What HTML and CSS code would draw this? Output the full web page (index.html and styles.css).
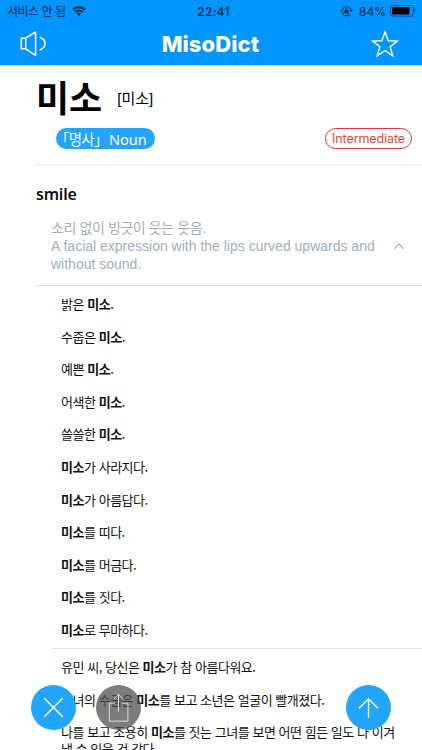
FILE: index.html
```html
<!DOCTYPE html>
<html lang="ko">
<head>
  <meta charset="UTF-8">
  <meta name="viewport" content="width=device-width, initial-scale=1">
  <title>MisoDict</title>
  <link rel="stylesheet" href="styles.css">
</head>
<body>
  <header class="header">
    <div class="status">
      <div class="status-left">
        <span class="carrier">서비스 안 됨</span>
        <svg class="wifi" width="14" height="10" viewBox="0 0 14 10" fill="none" stroke="#06243f" stroke-width="2">
          <path d="M.8 3.8a8.8 8.8 0 0 1 12.4 0M3.2 6.1a5.4 5.4 0 0 1 7.6 0"/>
          <path d="M7 10 4.9 7.8a3 3 0 0 1 4.2 0z" fill="#06243f" stroke="none"/>
        </svg>
      </div>
      <span class="clock">22:41</span>
      <div class="status-right">
        <svg width="12" height="12" viewBox="0 0 12 12" fill="none" stroke="#06243f">
          <path d="M9.3 9.2A4.6 4.6 0 1 1 10.2 5"/>
          <path d="M8.5 4.8h3.3l-1.6 2.3z" fill="#06243f" stroke="none"/>
          <path d="M3.5 5.3h4v3.2h-4z" fill="#06243f" stroke="none"/>
          <path d="M4.4 5.5V4.3a1.1 1.1 0 0 1 2.2 0v1.2" stroke-width=".8"/>
        </svg>
        <span class="percent">84%</span>
        <svg width="27" height="12" viewBox="0 0 27 12">
          <rect x=".5" y=".5" width="23" height="10.6" rx="2.6" fill="none" stroke="#07477f"/>
          <rect x="2" y="2" width="17.5" height="7.6" rx="1" fill="#000"/>
          <path d="M24.7 4v3.8c1.4-.5 1.4-3.3 0-3.8z" fill="#07477f"/>
        </svg>
      </div>
    </div>
    <div class="navbar">
      <svg class="speaker" width="27" height="26" viewBox="0 0 27 26" fill="none" stroke="#fff" stroke-width="1.5" stroke-linejoin="round" stroke-linecap="round">
        <path d="M5.7 7.2H1.3v10.6h4.4zM5.7 7.2 15.6 1v23.4l-9.9-6.6M20.3 6.5c6.3 2.6 6.3 9.6 0 12.2"/>
      </svg>
      <h1 class="logo">MisoDict</h1>
      <svg class="star" width="28" height="28" viewBox="0 0 28 28" fill="none" stroke="#fff" stroke-width="1.4">
        <path d="m14 2 3.2 8.8 9.3.3-7.4 5.7 2.7 9L14 20.5l-7.8 5.3 2.7-9-7.4-5.7 9.3-.3z"/>
      </svg>
    </div>
  </header>

  <main class="entry">
    <section class="word">
      <div class="word-title">
        <h2>미소</h2>
        <span class="pronunciation">[미소]</span>
      </div>
      <div class="tags">
        <span class="tag-noun"><span class="pos">「명사」</span><span>Noun</span></span>
        <span class="tag-level">Intermediate</span>
      </div>
    </section>

    <h3 class="meaning">smile</h3>

    <section class="definition">
      <div>
        <p class="definition-ko">소리 없이 빙긋이 웃는 웃음.</p>
        <p>A facial expression with the lips curved upwards and<br>without sound.</p>
      </div>
      <svg class="chevron" width="10" height="8" viewBox="0 0 10 8" fill="none" stroke="#808890">
        <path d="m.6 6.8 4.4-5 4.4 5"/>
      </svg>
    </section>

    <ul class="examples phrases">
      <li>밝은 <b>미소</b>.</li>
      <li>수줍은 <b>미소</b>.</li>
      <li>예쁜 <b>미소</b>.</li>
      <li>어색한 <b>미소</b>.</li>
      <li>쓸쓸한 <b>미소</b>.</li>
      <li><b>미소</b>가 사라지다.</li>
      <li><b>미소</b>가 아름답다.</li>
      <li><b>미소</b>를 띠다.</li>
      <li><b>미소</b>를 머금다.</li>
      <li><b>미소</b>를 짓다.</li>
      <li><b>미소</b>로 무마하다.</li>
    </ul>
    <ul class="examples sentences">
      <li>유민 씨, 당신은 <b>미소</b>가 참 아름다워요.</li>
      <li>그녀의 수줍은 <b>미소</b>를 보고 소년은 얼굴이 빨개졌다.</li>
      <li>나를 보고 조용히 <b>미소</b>를 짓는 그녀를 보면 어떤 힘든 일도 다 이겨<br>낼 수 있을 것 같다.</li>
    </ul>
  </main>

  <nav class="actions">
    <button class="round" aria-label="닫기">
      <svg width="45" height="45" viewBox="0 0 45 45"><path d="m13.3 13.3 18.4 18.4m0-18.4L13.3 31.7"/></svg>
    </button>
    <button class="round share" aria-label="공유">
      <svg width="45" height="45" viewBox="0 0 45 45"><path d="M19.2 18.2h-5.9v18h18.6v-18H26M22.5 26.5V9.3M18 14l4.5-4.7L27 14"/></svg>
    </button>
    <button class="round top" aria-label="맨 위로">
      <svg width="45" height="45" viewBox="0 0 45 45"><path d="M22.5 32.8V14M13 23.3l9.5-9.5 9.5 9.5"/></svg>
    </button>
  </nav>
</body>
</html>
```

FILE: styles.css
```css
* {
  box-sizing: border-box;
}
body {
  margin: 0;
  height: 750px;
  overflow: hidden;
  background: #fff;
  color: #111;
  font-family: "Liberation Sans", "Noto Sans CJK KR", sans-serif;
}
h1, h2, h3, p, ul {
  margin: 0;
  padding: 0;
}
svg {
  display: block;
  flex: none;
}

/* header */
.header {
  height: 66px;
  background: #0095ff;
  border-bottom: 1px solid #b5e2ff;
}
.status {
  display: grid;
  grid-template-columns: 1fr auto 1fr;
  align-items: center;
  height: 22px;
  padding: 0 5px 0 7px;
  color: #06243f;
  font-family: Inter, "Noto Sans CJK KR", sans-serif;
  font-size: 12px;
}
.status-left,
.status-right {
  display: flex;
  align-items: center;
}
.carrier {
  font-family: "Noto Sans CJK KR", sans-serif;
  font-size: 12px;
  letter-spacing: -0.5px;
  line-height: 22px;
}
.wifi {
  margin-left: 7px;
}
.clock {
  font-weight: 500;
  letter-spacing: 0.3px;
  padding-left: 3px;
}
.status-right {
  justify-content: flex-end;
}
.percent {
  margin: 0 4px 0 6px;
}
.navbar {
  display: flex;
  align-items: center;
  justify-content: space-between;
  height: 43px;
  padding: 0 23px 0 20px;
}
.logo {
  padding-left: 3px;
  color: #fff;
  font-family: Inter, sans-serif;
  font-size: 22px;
  font-weight: 800;
  letter-spacing: 0.1px;
}

/* word */
.entry {
  padding-left: 36px;
}
.word {
  height: 99px;
  padding-top: 8px;
  border-bottom: 1px solid #ececec;
}
.word-title {
  display: flex;
  align-items: center;
  height: 44px;
  color: #000;
}
.word-title h2 {
  font-family: "Noto Sans CJK KR", sans-serif;
  font-size: 36px;
  line-height: 44px;
}
.pronunciation {
  margin: 3px 0 0 15px;
  font-size: 15px;
}
.tags {
  display: flex;
  align-items: center;
  justify-content: space-between;
  padding: 10px 10px 0 20px;
}
.tag-noun {
  display: flex;
  align-items: center;
  width: 99px;
  height: 21px;
  border-radius: 11px;
  background: #22a5fb;
  color: #fff;
  font-family: "Noto Sans", "Noto Sans CJK KR", sans-serif;
  font-size: 14.5px;
}
.pos {
  width: 54px;
  margin-left: -1px;
  letter-spacing: -0.8px;
}
.tag-level {
  width: 87px;
  height: 21px;
  border: 1px solid #dc3b3b;
  border-radius: 11px;
  color: #dc4a38;
  font-family: Inter, sans-serif;
  font-size: 12.5px;
  letter-spacing: -0.1px;
  line-height: 19px;
  text-align: center;
}
.meaning {
  padding-top: 17px;
  color: #111;
  font-family: "Noto Sans", sans-serif;
  font-size: 16px;
  font-weight: 600;
  letter-spacing: -0.2px;
  line-height: 24px;
}

/* definition */
.definition {
  display: flex;
  align-items: center;
  justify-content: space-between;
  height: 80px;
  padding: 0 18px 0 15px;
  border-bottom: 1px solid #e2e2e2;
  color: #a3afba;
  font-size: 14px;
  line-height: 18px;
}
.definition-ko {
  letter-spacing: -0.4px;
}

/* examples */
.examples {
  list-style: none;
  color: #111;
  font-family: "Noto Sans CJK KR", sans-serif;
  font-size: 13px;
  line-height: 17px;
  letter-spacing: -0.47px;
  white-space: nowrap;
}
.examples li {
  padding-bottom: 15.6px;
}
.phrases {
  padding: 9px 0 0 25px;
}
.phrases li:last-child {
  padding-bottom: 10px;
}
.sentences {
  margin-left: 16px;
  padding: 9px 0 0 9px;
  border-top: 1px solid #e2e2e2;
}

/* floating buttons */
.actions {
  position: fixed;
  left: 31px;
  right: 31px;
  bottom: 20px;
  display: flex;
}
.round {
  width: 45px;
  height: 45px;
  padding: 0;
  border: none;
  border-radius: 50%;
  background: #22a5fb;
}
.round path {
  fill: none;
  stroke: #fff;
  stroke-width: 1.3;
}
.share {
  margin-left: 20px;
  background: rgba(80, 80, 80, 0.75);
}
.share path {
  stroke: #ddd;
  stroke-width: 1;
}
.top {
  margin-left: auto;
}
```
